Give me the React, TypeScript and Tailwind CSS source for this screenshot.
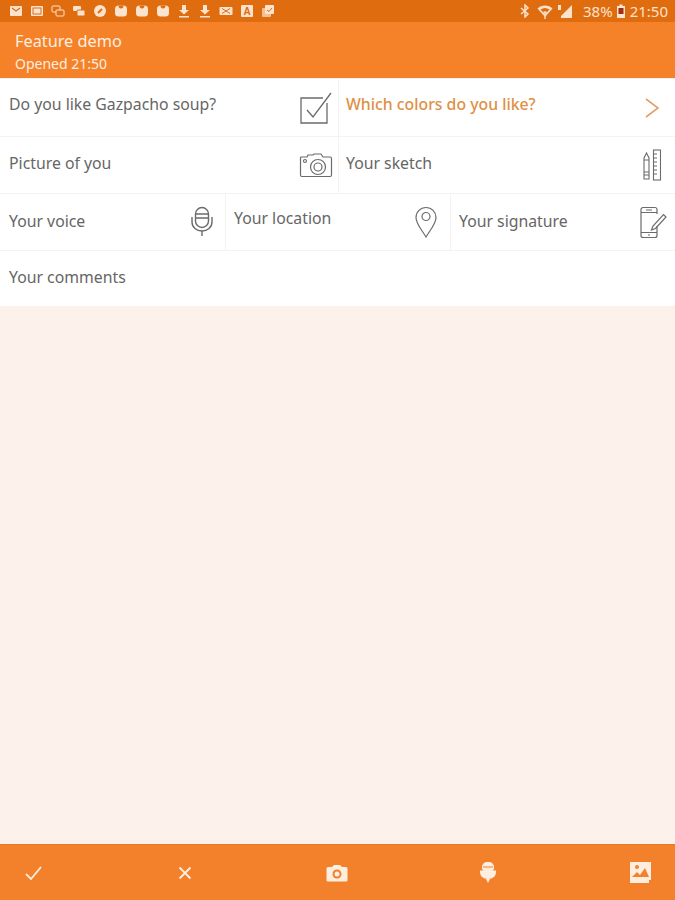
import type { ReactNode } from "react"

const CheckboxIcon = () => (
  <svg width="34" height="34" viewBox="0 0 34 34" fill="none" stroke="#6b6b6b" strokeWidth="1.3">
    <path d="M28 12v20H2V7h22" />
    <path d="M8 19l6 7L32 2" />
  </svg>
)

const ChevronIcon = () => (
  <svg width="16" height="22" viewBox="0 0 16 22" fill="none" stroke="#e3a06c" strokeWidth="1.6">
    <path d="M2 2l12 9-12 9" />
  </svg>
)

const CameraIcon = () => (
  <svg width="34" height="26" viewBox="0 0 34 26" fill="none" stroke="#6b6b6b" strokeWidth="1.2">
    <path d="M2 5h6l1-2h5l1-1h7l2 3h7a1.500 1.500 0 0 1 1.500 1.500V23a1.500 1.500 0 0 1-1.500 1.500H3A1.500 1.500 0 0 1 1.500 23V6A1 1 0 0 1 2 5z" />
    <circle cx="19" cy="15" r="7.500" />
    <circle cx="19" cy="15" r="4" />
    <circle cx="6" cy="9" r="1.500" />
  </svg>
)

const SketchIcon = () => (
  <svg width="22" height="32" viewBox="0 0 22 32" fill="none" stroke="#6b6b6b" strokeWidth="1.1">
    <rect x="12.500" y="1" width="7" height="30" />
    <path d="M13 5h3M13 9h3M13 13h3M13 17h3M13 21h3M13 25h3" />
    <path d="M3 30V9l2.500-5L8 9v21z" />
    <path d="M3 11h5M3 23h5M3 26h5" />
  </svg>
)

const MicIcon = () => (
  <svg width="24" height="32" viewBox="0 0 24 32" fill="none" stroke="#6b6b6b" strokeWidth="1.4">
    <rect x="5.500" y="1.500" width="13" height="20" rx="6.500" />
    <path d="M6 8h12M6 12h12" />
    <path d="M2 11v5c0 5.500 4.500 9 10 9s10-3.500 10-9v-5" />
    <path d="M12 25v5" />
  </svg>
)

const PinIcon = () => (
  <svg width="24" height="33" viewBox="0 0 24 33" fill="none" stroke="#6b6b6b" strokeWidth="1.2">
    <path d="M12 31C8 24 2 18 2 11.500a10 10 0 0 1 20 0C22 18 16 24 12 31z" />
    <circle cx="12" cy="10.500" r="4" />
  </svg>
)

const SignatureIcon = () => (
  <svg width="28" height="33" viewBox="0 0 28 33" fill="none" stroke="#6b6b6b" strokeWidth="1.2">
    <path d="M18 8V3.500A2 2 0 0 0 16 1.500H4A2 2 0 0 0 2 3.500v26A2 2 0 0 0 4 31.500h12a2 2 0 0 0 2-2V20" />
    <path d="M2 6.500h16M2 26.500h16M7 4h6M9 29h2" />
    <path d="M14 20l-1.500 4 4-1.500L27 11l-2.500-2.500z" />
  </svg>
)

const BarCamera = () => (
  <svg width="22" height="18" viewBox="0 0 22 18">
    <path d="M2 3h4l2-2h6l2 2h4a1.500 1.500 0 0 1 1.500 1.500V16a1.500 1.500 0 0 1-1.500 1.500H2A1.500 1.500 0 0 1 .5 16V4.500A1.500 1.500 0 0 1 2 3z" fill="#fdeee0" />
    <circle cx="11" cy="10" r="4.500" fill="#f3812b" />
    <circle cx="11" cy="10" r="2.500" fill="#fdeee0" />
  </svg>
)

const BarMic = () => (
  <svg width="18" height="23" viewBox="0 0 18 23">
    <rect x="3" y="1" width="12" height="15" rx="5" fill="#fdeee0" />
    <path d="M1 9h16v2c0 4-3 7-8 7s-8-3-8-7z" fill="#fdeee0" />
    <path d="M4 6h10M1 9h3M14 9h3" stroke="#f3812b" strokeWidth="1.2" />
    <path d="M7 18h4l-2 4z" fill="#fdeee0" />
  </svg>
)

const BarGallery = () => (
  <svg width="23" height="23" viewBox="0 0 23 23">
    <path d="M1 19h19v3H1z" fill="#fdeee0" />
    <rect x="1" y="1" width="21" height="18" fill="#fdeee0" />
    <path d="M3 16l5-5 3 3 5-7 4 9z" fill="#f3812b" />
    <circle cx="8" cy="6" r="2" fill="#f3812b" />
  </svg>
)

const StatusGlyph = ({ kind }: { kind: string }) => {
  const c = "#fbe3cd"
  const o = "#e06c10"
  return (
    <svg width="14" height="14" viewBox="0 0 14 14">
      {kind === "mail" && (
        <>
          <rect x="1" y="2" width="12" height="10" rx="1" fill={c} />
          <path d="M3 4l4 3 4-3" fill="none" stroke={o} strokeWidth="1.2" />
        </>
      )}
      {kind === "card" && (
        <>
          <rect x="1" y="2" width="12" height="10" rx="1" fill={c} />
          <rect x="3" y="4" width="8" height="6" fill="none" stroke={o} />
        </>
      )}
      {kind === "chat" && (
        <>
          <rect x="1" y="2" width="8" height="6" rx="1" fill="none" stroke={c} />
          <rect x="5" y="6" width="8" height="6" rx="1" fill={o} stroke={c} />
        </>
      )}
      {kind === "chat2" && (
        <>
          <rect x="1" y="2" width="8" height="5" rx="1" fill={c} />
          <rect x="5" y="6" width="8" height="6" rx="1" fill={c} stroke={o} />
        </>
      )}
      {kind === "round" && (
        <>
          <circle cx="7" cy="7" r="6" fill={c} />
          <path d="M5 9l4-4" stroke={o} strokeWidth="2" />
        </>
      )}
      {kind === "bag" && (
        <>
          <rect x="1" y="1.500" width="12" height="11" rx="3.500" fill={c} />
          <path d="M4.500 1.500a2.500 3 0 0 0 5 0z" fill={o} />
        </>
      )}
      {kind === "down" && <path d="M5 1h4v5h3L7 10.500 2 6h3zM2 12h10v1.500H2z" fill={c} />}
      {kind === "x" && (
        <>
          <rect x="0.500" y="3" width="13" height="8" rx="1" fill={c} />
          <path d="M3 4.500l8 5M11 4.500l-8 5" stroke={o} />
        </>
      )}
      {kind === "a" && (
        <>
          <rect x="1" y="1" width="12" height="12" rx="1" fill={c} />
          <text x="7" y="11" textAnchor="middle" fontSize="10" fontWeight="700" fontFamily="Liberation Sans, sans-serif" fill={o}>A</text>
        </>
      )}
      {kind === "note" && (
        <>
          <rect x="1" y="4" width="9" height="9" rx="1" fill={c} opacity="0.7" />
          <rect x="4" y="1" width="9" height="9" rx="1" fill={c} />
          <path d="M6 6l2 1.500L11 4" fill="none" stroke={o} />
        </>
      )}
    </svg>
  )
}

const Cell = ({ label, icon, active, className, labelClass }: { label: string; icon?: ReactNode; active?: boolean; className?: string; labelClass?: string }) => (
  <div className={`flex items-center justify-between min-w-0 bg-white ${className ?? ""}`}>
    <span className={`text-[15.8px] whitespace-nowrap ${labelClass ?? ""} ${active ? "text-[#e08f45] font-medium" : "text-[#666666]"}`}>{label}</span>
    {icon}
  </div>
)

const STATUS_ICONS = ["mail", "card", "chat", "chat2", "round", "bag", "bag", "bag", "down", "down", "x", "a", "note"]

export default function App() {
  return (
    <div className="h-[900px] w-[675px] flex flex-col bg-[#fdf1ec] overflow-hidden font-['Noto_Sans',sans-serif]">
      <div className="h-[22px] shrink-0 bg-[#e06c10] flex items-center justify-between pl-[9px] pr-[7px] text-[#fbe3cd]">
        <div className="flex gap-[7px]">
          {STATUS_ICONS.map((k, i) => (
            <StatusGlyph key={i} kind={k} />
          ))}
        </div>
        <div className="flex items-center text-[15px]">
          <svg width="10" height="14" viewBox="0 0 10 14" fill="none" stroke="#fbe3cd" strokeWidth="1.500">
            <path d="M1 4l7 6-3 3V1l3 3-7 6" />
          </svg>
          <svg className="ml-[7px]" width="16" height="15" viewBox="0 0 16 15" fill="#fbe3cd">
            <path d="M0.500 4.500C4.500 .5 11.500 .5 15.500 4.500L8 13z" />
            <path d="M3.500 5.500c3-2 6-2 9 0L8 10.500z" fill="#e06c10" />
            <path d="M6 8c1.500-1 2.500-1 4 0l-2 2.500z" />
            <path d="M7.300 12h1.400v3H7.300z" />
          </svg>
          <svg className="ml-[4px]" width="16" height="15" viewBox="0 0 16 15" fill="#fbe3cd">
            <path d="M15 1v13H4V12z" />
            <path d="M1 1h3v5H1z" />
          </svg>
          <span className="ml-[10px]">38%</span>
          <svg className="ml-[4px]" width="8" height="14" viewBox="0 0 8 14">
            <rect x="0" y="2" width="8" height="12" fill="#fbe3cd" />
            <rect x="2.500" y="0.500" width="3" height="2" fill="#fbe3cd" />
            <rect x="1.500" y="4" width="5" height="6" fill="#9c2f14" />
          </svg>
          <span className="ml-[5px]">21:50</span>
        </div>
      </div>

      <div className="h-[56px] shrink-0 bg-[#f58229] px-[15px] pt-[9px] text-[#fdeee0]">
        <div className="text-[16.3px] leading-[20px]">Feature demo</div>
        <div className="text-[14px] leading-[20px] mt-[3px]">Opened 21:50</div>
      </div>

      <div className="flex flex-col gap-px pt-px bg-[#f5f3f1]">
        <div className="grid grid-cols-[338px_1fr] gap-px h-[57px]">
          <Cell label="Do you like Gazpacho soup?" icon={<CheckboxIcon />} className="pl-[9px] pr-[5px]" labelClass="pb-[6px]" />
          <Cell label="Which colors do you like?" active icon={<ChevronIcon />} className="pl-[7px] pr-[15px]" labelClass="pb-[6px]" />
        </div>
        <div className="grid grid-cols-[338px_1fr] gap-px h-[56px]">
          <Cell label="Picture of you" icon={<CameraIcon />} className="pl-[9px] pr-[5px]" labelClass="pb-[2px]" />
          <Cell label="Your sketch" icon={<SketchIcon />} className="pl-[7px] pr-[12px]" labelClass="pb-[2px]" />
        </div>
        <div className="grid grid-cols-[225px_224px_1fr] gap-px h-[56px]">
          <Cell label="Your voice" icon={<MicIcon />} className="pl-[9px] pr-[11px]" />
          <Cell label="Your location" icon={<PinIcon />} className="pl-[8px] pr-[12px]" labelClass="pb-[6px]" />
          <Cell label="Your signature" icon={<SignatureIcon />} className="pl-[8px] pr-[8px]" />
        </div>
        <Cell label="Your comments" className="h-[55px] pl-[9px] pr-[8px]" labelClass="pb-[2px]" />
      </div>

      <div className="flex-1" />

      <div className="h-[56px] shrink-0 bg-[#f3812b] border-t border-[#e8791f] flex items-center justify-between pl-[8px] pr-[10px]">
        <div className="w-[50px] flex justify-center">
          <svg width="17" height="14" viewBox="0 0 17 14" fill="none" stroke="#fdeee0" strokeWidth="1.800">
            <path d="M1 8l5 5L16 1" />
          </svg>
        </div>
        <div className="w-[50px] flex justify-center">
          <svg width="14" height="14" viewBox="0 0 14 14" fill="none" stroke="#fdeee0" strokeWidth="1.800">
            <path d="M1.500 1.500l11 11M12.500 1.500l-11 11" />
          </svg>
        </div>
        <div className="w-[50px] flex justify-center"><BarCamera /></div>
        <div className="w-[50px] flex justify-center"><BarMic /></div>
        <div className="w-[50px] flex justify-center"><BarGallery /></div>
      </div>
    </div>
  )
}
